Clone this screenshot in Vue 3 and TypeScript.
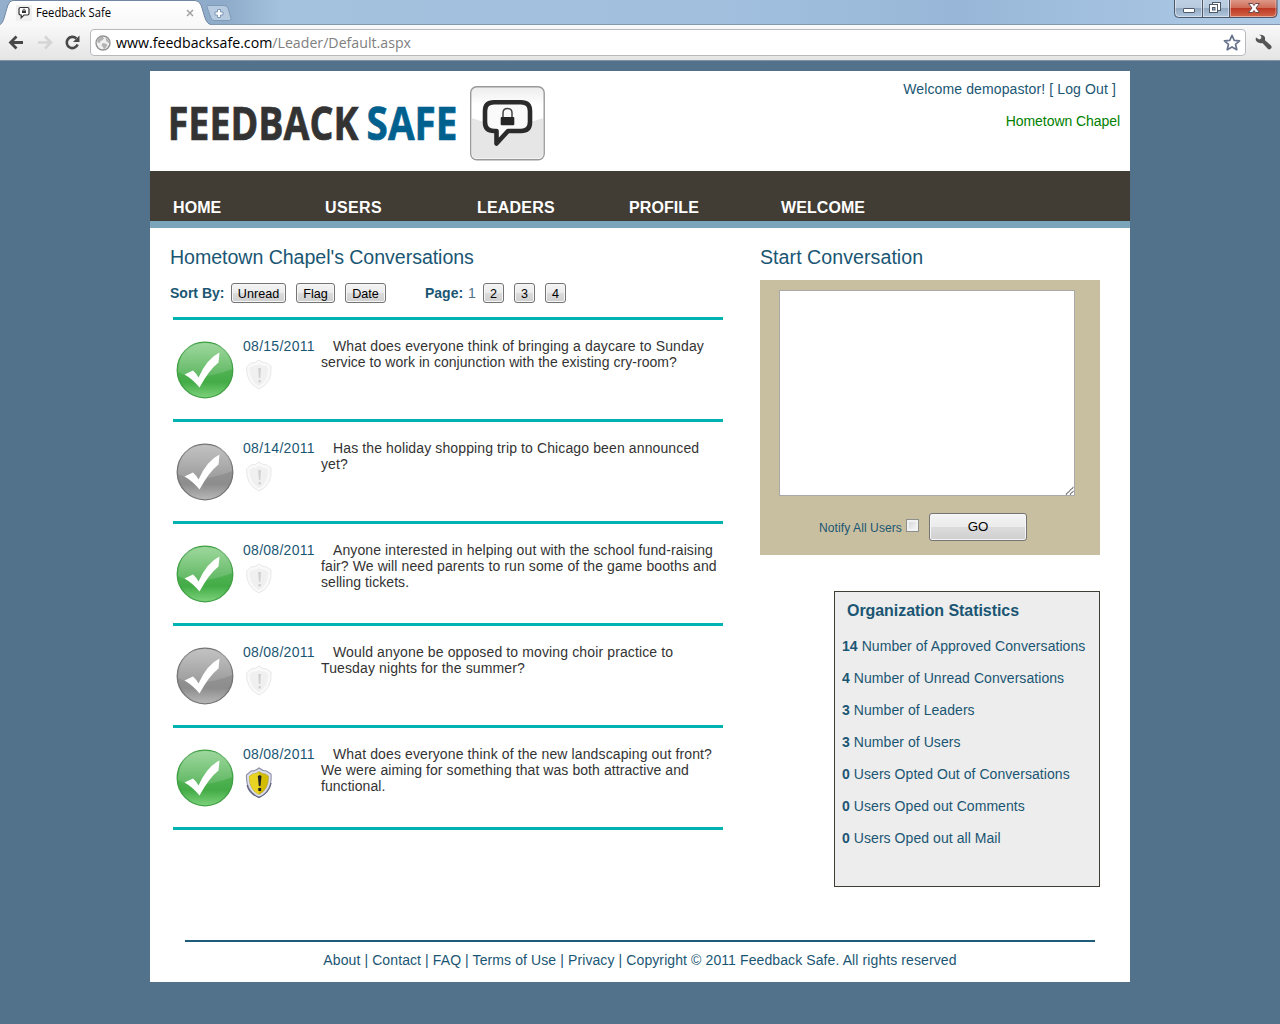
<script setup lang="ts">
interface Line {
  text: string
  tracking: number
}

interface Conversation {
  date: string
  read: boolean
  flagged: boolean
  lines: Line[]
}

interface Stat {
  count: number
  label: string
}

const navItems: string[] = ['HOME', 'USERS', 'LEADERS', 'PROFILE', 'WELCOME']
const sorts: string[] = ['Unread', 'Flag', 'Date']
const pages: number[] = [2, 3, 4]

const conversations: Conversation[] = [
  {
    date: '08/15/2011', read: false, flagged: false,
    lines: [
      { text: 'What does everyone think of bringing a daycare to Sunday', tracking: 0.135 },
      { text: 'service to work in conjunction with the existing cry-room?', tracking: 0.045 },
    ],
  },
  {
    date: '08/14/2011', read: true, flagged: false,
    lines: [
      { text: 'Has the holiday shopping trip to Chicago been announced', tracking: 0.12 },
      { text: 'yet?', tracking: 0.1 },
    ],
  },
  {
    date: '08/08/2011', read: false, flagged: false,
    lines: [
      { text: 'Anyone interested in helping out with the school fund-raising', tracking: 0.105 },
      { text: 'fair? We will need parents to run some of the game booths and', tracking: 0.1 },
      { text: 'selling tickets.', tracking: 0.06 },
    ],
  },
  {
    date: '08/08/2011', read: true, flagged: false,
    lines: [
      { text: 'Would anyone be opposed to moving choir practice to', tracking: 0.13 },
      { text: 'Tuesday nights for the summer?', tracking: 0.12 },
    ],
  },
  {
    date: '08/08/2011', read: false, flagged: true,
    lines: [
      { text: 'What does everyone think of the new landscaping out front?', tracking: 0.12 },
      { text: 'We were aiming for something that was both attractive and', tracking: 0.07 },
      { text: 'functional.', tracking: 0.05 },
    ],
  },
]

const stats: Stat[] = [
  { count: 14, label: 'Number of Approved Conversations' },
  { count: 4, label: 'Number of Unread Conversations' },
  { count: 3, label: 'Number of Leaders' },
  { count: 3, label: 'Number of Users' },
  { count: 0, label: 'Users Opted Out of Conversations' },
  { count: 0, label: 'Users Oped out Comments' },
  { count: 0, label: 'Users Oped out all Mail' },
]
</script>

<template>
  <div class="window">
    <div class="tabstrip">
      <svg class="tabs" width="240" height="25" viewBox="0 0 240 25">
        <defs>
          <linearGradient id="tabFill" x1="0" y1="0" x2="0" y2="1">
            <stop offset="0" stop-color="#ffffff" />
            <stop offset="1" stop-color="#f8f8f9" />
          </linearGradient>
        </defs>
        <path d="M0 24.5C4 23 5 13 8 5Q9.500 0.500 13 0.500H195Q199 0.500 201 5C204 13 205 24 211 24.500V25H0Z" fill="url(#tabFill)" />
        <path d="M0 24.500C4 23 5 13 8 5Q9.500 0.500 13 0.500H195Q199 0.500 201 5C204 13 205 24 211 24.500" fill="none" stroke="#6f87a2" />
        <path d="M207 7Q206 5.500 208 5.500H224Q227 5.500 228 8L231 18Q232 20.500 229 20.500H214Q212 20.500 211 18Z" fill="#b6cbe0" stroke="#7f9ab8" />
        <path d="M217.500 9.500h3v2.500h2.500v3h-2.500v2.500h-3v-2.500h-2.500v-3h2.500z" fill="#fff" stroke="#7590ad" stroke-width=".9" />
        <rect x="16" y="5" width="16" height="16" fill="#f0f0f0" />
        <path d="M20.500 7.500h7q1.500 0 1.500 1.500v4.500q0 1.500-1.500 1.500h-3.500l-2.800 2.800v-2.800q-2.200 0-2.200-1.500V9q0-1.500 1.500-1.500z" fill="#fff" stroke="#333" stroke-width="1.200" />
        <rect x="22" y="10.500" width="4" height="2.500" fill="#333" />
        <path d="M23 10.500V9.500q1-1.200 2 0v1" fill="none" stroke="#333" stroke-width=".7" />
        <text x="36" y="17" textLength="75" lengthAdjust="spacingAndGlyphs" font-family="'Open Sans','Noto Sans',sans-serif" font-size="12" fill="#000">Feedback Safe</text>
        <path d="M187 10l6 6M193 10l-6 6" stroke="#a3a3a3" stroke-width="1.500" />
      </svg>
      <svg class="controls" width="106" height="20" viewBox="0 0 106 20">
        <defs>
          <linearGradient id="ctl" x1="0" y1="0" x2="0" y2="1">
            <stop offset="0" stop-color="#bdd0e4" />
            <stop offset=".48" stop-color="#b6c9dd" />
            <stop offset=".5" stop-color="#94aac2" />
            <stop offset="1" stop-color="#b1c8df" />
          </linearGradient>
          <linearGradient id="closeFill" x1="0" y1="0" x2="0" y2="1">
            <stop offset="0" stop-color="#df9d8d" />
            <stop offset=".48" stop-color="#cf6b56" />
            <stop offset=".5" stop-color="#bd3822" />
            <stop offset="1" stop-color="#d2664a" />
          </linearGradient>
        </defs>
        <path d="M0.500-1V13.500Q0.500 17.500 4.500 17.500H99Q103 17.500 103 13.500V-1Z" fill="url(#ctl)" />
        <path d="M55.500-1V17.500H99Q103 17.500 103 13.500V-1Z" fill="url(#closeFill)" />
        <path d="M1.500 0V13Q1.500 16.500 5 16.500H98.500Q102 16.500 102 13V0M27.500 0V16M29.500 0V16M54.500 0V16M56.500 0V16" fill="none" stroke="#fff" stroke-opacity=".45" />
        <path d="M0.500-1V13.500Q0.500 17.500 4.500 17.500H99Q103 17.500 103 13.500V-1M28.500 0V17M55.500 0V17" fill="none" stroke="#4d5768" />
        <rect x="9.500" y="8.500" width="11" height="4" rx=".5" fill="#fff" stroke="#4d5a6c" />
        <rect x="38.500" y="2.500" width="8" height="8" fill="#fff" stroke="#4d5a6c" />
        <rect x="35.500" y="4.500" width="8" height="8" fill="#fff" stroke="#4d5a6c" />
        <rect x="38.500" y="7.500" width="2.500" height="2.500" fill="#9bb0c6" stroke="#4d5a6c" />
        <path d="M74.500 3.500h4l1.500 2 1.500-2h4l-3.500 4.500 3.500 4.500h-4l-1.500-2-1.500 2h-4l3.500-4.500z" fill="#fff" stroke="#6b4a4c" />
      </svg>
    </div>
    <div class="toolbar">
      <svg width="90" height="36" viewBox="0 25 90 36">
        <path d="M10 42.500H23M16.500 36.500L10.500 42.500L16.500 48.500" fill="none" stroke="#484848" stroke-width="2.800" />
        <path d="M38 42.500H50.500M45 36.500L51 42.500L45 48.500" fill="none" stroke="#d5d5d5" stroke-width="2.600" />
        <path d="M76.300 38.500A5.600 5.600 0 1 0 77.600 44.500" fill="none" stroke="#484848" stroke-width="2.600" />
        <path d="M79.500 35.500V42H73Z" fill="#484848" />
      </svg>
      <div class="omnibox">
        <svg class="globe" width="16" height="16" viewBox="0 0 16 16">
          <circle cx="8" cy="8" r="7" fill="#f0f0f0" stroke="#929292" stroke-width="1.400" />
          <path d="M2 4.500L5 1.800 8 2 9 3.500 7 5.500 5.500 6 5 8 2.500 7.500ZM7.500 8L10.500 8.500 12.500 10 11 12.500 9 14.500 8 12 6.500 10.500ZM10.500 2.500L13.500 5 14.500 8 12.500 7.500 11 5.500Z" fill="#b3b3b3" />
        </svg>
        <svg class="url" width="310" height="24" viewBox="0 0 310 24">
          <text x="1" y="17" textLength="295" lengthAdjust="spacingAndGlyphs" font-family="'Open Sans','Noto Sans',sans-serif" font-size="15" fill="#000">www.feedbacksafe.com<tspan fill="#808080">/Leader/Default.aspx</tspan></text>
        </svg>
        <svg class="star" width="18" height="18" viewBox="0 0 18 18">
          <path d="M9 1.300L11.200 6.300 16.600 6.800 12.500 10.300 13.800 15.700 9 12.900 4.200 15.700 5.500 10.300 1.400 6.800 6.800 6.300Z" fill="#fff" stroke="#68748d" stroke-width="1.700" stroke-linejoin="round" />
        </svg>
      </div>
      <svg class="wrench" width="18" height="18" viewBox="0 0 18 18">
        <path d="M1 3.500L4.200 5.600 6.300 4.500 6.200 2 4 0.800Q8.500 0 10 3.500L10 6.300 16 11.600Q17.200 13.200 16 14.600 14.600 16 13 14.900L7.400 9Q3 9.800 1 6.800 .4 5 1 3.500Z" fill="#555" />
      </svg>
    </div>
  </div>

  <div class="page">
    <header class="header">
      <svg class="logo" width="400" height="90" viewBox="0 0 400 90">
        <defs>
          <linearGradient id="badge" x1="0" y1="0" x2="0" y2="1">
            <stop offset="0" stop-color="#ececec" />
            <stop offset=".25" stop-color="#ffffff" />
          </linearGradient>
        </defs>
        <g font-family="'Open Sans','Noto Sans',sans-serif" font-weight="700" font-size="47" stroke-width=".7">
          <text transform="translate(17.700 69.300) scale(.8 1)" fill="#333" stroke="#333">FEEDBACK</text>
          <text transform="translate(216.600 69.300) scale(.822 1)" fill="#00618f" stroke="#00618f">SAFE</text>
        </g>
        <rect x="320.700" y="15.700" width="73.500" height="73" rx="6" fill="url(#badge)" stroke="#999" stroke-width="1.400" />
        <path d="M322 47Q357 61 393 47V82Q393 87.500 387 87.500H328Q322 87.500 322 82Z" fill="#e6e6e6" />
        <path d="M344 31.300H371Q380 31.300 380 40V51Q380 60 371 60H358L346.500 72.500V60H344Q335 60 335 51V40Q335 31.300 344 31.300Z" fill="#fafafa" stroke="#2b2b2b" stroke-width="4.600" stroke-linejoin="round" />
        <path d="M353 47V42Q353 37.500 357.500 37.500T362 42V47" fill="none" stroke="#444" stroke-width="1.500" />
        <rect x="350.700" y="46" width="13.600" height="8.300" rx="1" fill="#262626" />
      </svg>
      <div class="account">
        <div class="welcome">Welcome demopastor! [ <a>Log Out</a> ]</div>
        <div class="org">Hometown Chapel</div>
      </div>
    </header>

    <nav class="nav">
      <a v-for="item in navItems" :key="item">{{ item }}</a>
    </nav>

    <main class="main">
      <section class="feed">
        <h2 class="feed-title">Hometown Chapel's Conversations</h2>
        <div class="filters">
          <b class="sort-label">Sort By:</b>
          <button v-for="sort in sorts" :key="sort" class="btn" :class="sort.toLowerCase()">{{ sort }}</button>
          <b class="page-label">Page:</b>
          <span class="current">1</span>
          <button v-for="number in pages" :key="number" class="btn num">{{ number }}</button>
        </div>
        <div class="list">
          <article v-for="(item, index) in conversations" :key="index" class="row">
            <svg class="status" width="58" height="58" viewBox="0 0 58 58">
              <defs>
                <linearGradient :id="`ball${index}`" x1="0" y1="0" x2="0" y2="1">
                  <stop offset="0" :stop-color="item.read ? '#a8a8a8' : '#74c673'" />
                  <stop offset=".5" :stop-color="item.read ? '#939393' : '#50b253'" />
                  <stop offset=".72" :stop-color="item.read ? '#8d8d8d' : '#43ac46'" />
                  <stop offset="1" :stop-color="item.read ? '#b8b8b8' : '#7dd27c'" />
                </linearGradient>
                <linearGradient :id="`shine${index}`" x1="0" y1="0" x2="0" y2="1">
                  <stop offset="0" stop-color="#fff" stop-opacity=".3" />
                  <stop offset="1" stop-color="#fff" stop-opacity=".12" />
                </linearGradient>
              </defs>
              <circle cx="29" cy="29" r="27.800" :fill="`url(#ball${index})`" :stroke="item.read ? '#757575' : '#3f9f43'" stroke-width="1.300" />
              <path d="M2 31Q15 38 31 35T56 28Q55 2 29 2T2 31Z" :fill="`url(#shine${index})`" />
              <path d="M8.500 33.500L17 29.500Q20 32 22.500 36.500Q31 17.500 43.500 11.500L42.500 21.500Q33 29 23.500 46.500Q16.500 38 8.500 33.500Z" fill="#fff" />
            </svg>
            <div class="meta">
              <span class="date">{{ item.date }}</span>
              <svg class="shield" width="28" height="32" viewBox="0 0 28 32">
                <template v-if="item.flagged">
                  <path d="M14 1Q17.500 4 21.500 4L26 7Q27.500 24 14 30.500Q.5 24 1.500 8L6 4Q11 4 14 1Z" fill="#dcdeea" stroke="#8d8fa6" stroke-width="1.100" />
                  <path d="M2 18Q4 26.500 14 30.500Q24 26.500 26.200 16" fill="none" stroke="#5d607b" stroke-width="1.100" />
                  <path d="M14 4.500Q17.500 7 20.500 7L23.500 9Q24 22.500 14 27.500Q4 22.500 4.300 9.500L7.500 7Q11.500 7 14 4.500Z" fill="#d3bd04" stroke="#a79a45" stroke-width=".6" />
                  <path d="M14 5Q11.500 7 7.500 7L4.500 9.500Q4 22 14 27.500Z" fill="#e9d323" />
                  <path d="M12.800 9Q14.500 7.500 16.500 9L15.500 19H13.800ZM13.300 21h2.800v3h-2.800z" fill="#222" />
                </template>
                <template v-else>
                  <path d="M14 1Q17.500 4 21.500 4L26 7Q27.500 24 14 30Q1 24 1.500 8L6 4Q11 4 14 1Z" fill="#f9f9f9" stroke="#e8e8e8" />
                  <path d="M14 5Q17.500 7 20.500 7L23 9Q23.500 22 14 27Q4.500 22 4.500 9L7.500 7Q11.500 7 14 5Z" fill="#f0f0f0" />
                  <path d="M13.200 9h2.800L15.300 19h-1.400zM13.500 21h2.300v2.500h-2.300z" fill="#d0d0d0" />
                </template>
              </svg>
            </div>
            <p class="message">
              <span v-for="line in item.lines" :key="line.text" :style="{ letterSpacing: `${line.tracking}px` }">{{ line.text }}</span>
            </p>
          </article>
        </div>
      </section>

      <aside class="side">
        <h2 class="start-title">Start Conversation</h2>
        <div class="compose">
          <div class="textarea">
            <svg width="9" height="9" viewBox="0 0 9 9"><path d="M1 8.500L8.500 1M5 8.500L8.500 5" stroke="#555" stroke-width="1.100" stroke-dasharray="1.600 .4" /></svg>
          </div>
          <div class="submit">
            <span>Notify All Users</span>
            <i class="checkbox"></i>
            <button class="btn go">GO</button>
          </div>
        </div>
        <div class="stats">
          <h3>Organization Statistics</h3>
          <p v-for="stat in stats" :key="stat.label"><b>{{ stat.count }}</b> {{ stat.label }}</p>
        </div>
      </aside>
    </main>

    <footer class="footer">About | Contact | FAQ | Terms of Use | Privacy | Copyright © 2011 Feedback Safe. All rights reserved</footer>
  </div>
</template>

<style>
html,
body {
  margin: 0;
  background: #52728b;
}
body {
  height: 1024px;
  overflow: hidden;
}
</style>

<style scoped>
* {
  box-sizing: border-box;
}
.window {
  height: 61px;
  border-bottom: 1px solid #8393a3;
}
.tabstrip {
  height: 25px;
  display: flex;
  justify-content: space-between;
  background: linear-gradient(90deg, #94afcc 0, #8eabc9 225px, #a4c1de 280px, #a2c0de 700px, #98b7d8 960px, #a7c4e2 1180px, #adc9e5 100%);
  box-shadow: inset 0 -1px #8398b0;
}
.tabs,
.controls,
.toolbar svg {
  display: block;
  flex: none;
}
.toolbar {
  height: 35px;
  display: flex;
  background: linear-gradient(#f9f9f9, #e4e4e5);
}
.omnibox {
  width: 1156px;
  height: 27px;
  margin-top: 4px;
  border: 1px solid #b7b9bc;
  border-radius: 4px;
  background: #fff;
  display: flex;
  align-items: center;
}
.globe {
  margin-left: 4px;
}
.url {
  margin-left: 4px;
}
.star {
  margin-left: auto;
  margin-right: 4px;
}
.wrench {
  margin: 9px 0 0 9px;
}
.page {
  width: 980px;
  height: 911px;
  margin: 10px auto 0;
  background: #fff;
  color: #1a5673;
  font: 14px/16px 'Liberation Sans', Arial, sans-serif;
}
.header {
  height: 100px;
  display: flex;
  justify-content: space-between;
}
.account {
  padding: 10px 10px 0 0;
  text-align: right;
}
.welcome {
  padding-right: 4px;
  letter-spacing: 0.12px;
}
.org {
  margin-top: 16px;
  color: #008000;
  letter-spacing: -0.06px;
}
.nav {
  height: 57px;
  display: flex;
  padding: 27px 0 0 23px;
  border-bottom: 7px solid #7aa5ba;
  background: #413c34;
  color: #fff;
  font-size: 16px;
  font-weight: 700;
  line-height: 19px;
  letter-spacing: 0.08px;
}
.nav a {
  width: 152px;
}
.nav a:nth-child(2) {
  letter-spacing: 0.4px;
}
.nav a:nth-child(3) {
  letter-spacing: 0.2px;
}
.main {
  height: 712px;
  display: flex;
}
h2 {
  margin: 0;
  font-size: 19.6px;
  font-weight: 400;
  line-height: 24px;
}
.feed-title {
  letter-spacing: -0.05px;
}
.start-title {
  letter-spacing: 0.05px;
}
.feed {
  width: 610px;
  padding: 17px 0 0 20px;
}
.filters {
  height: 20px;
  margin-top: 14px;
  display: flex;
  align-items: center;
}
.sort-label {
  width: 61px;
}
.btn {
  height: 20px;
  margin: 0 10px 0 0;
  padding: 1px 0 0;
  border: 1px solid #747474;
  border-radius: 3px;
  background: linear-gradient(#f4f4f4 0, #ebebeb 49%, #dcdcdc 50%, #cfcfcf 100%);
  box-shadow: inset 0 0 0 1px #f6f6f6;
  color: #000;
  text-align: center;
  font: 12.6px/16px 'Liberation Sans', Arial, sans-serif;
}
.unread {
  width: 55px;
}
.flag {
  width: 39px;
}
.date.btn {
  width: 41px;
}
.page-label {
  margin-left: 29px;
  width: 43px;
}
.current {
  width: 15px;
  color: #4d7287;
}
.num {
  width: 21px;
}
.list {
  width: 550px;
  margin: 14px 0 0 3px;
  border-top: 3px solid #00b2b1;
}
.row {
  height: 102px;
  display: flex;
  border-bottom: 3px solid #00b2b1;
}
.status {
  margin: 21px 0 0 3px;
  flex: none;
}
.meta {
  width: 78px;
  flex: none;
  padding: 18px 0 0 9px;
  display: flex;
  flex-direction: column;
  letter-spacing: 0.28px;
}
.shield {
  margin: 5px 0 0 2px;
}
.message {
  margin: 18px 0 0 9px;
  color: #333;
}
.message span {
  display: block;
  white-space: nowrap;
}
.message span:first-child {
  padding-left: 12px;
}
.side {
  width: 340px;
  padding-top: 17px;
  display: flex;
  flex-direction: column;
}
.compose {
  height: 275px;
  margin-top: 11px;
  padding: 10px 19px;
  background: #c8bea0;
}
.textarea {
  width: 296px;
  height: 206px;
  border: 1px solid #a9a9a9;
  background: #fff;
  display: flex;
  align-items: flex-end;
  justify-content: flex-end;
}
.submit {
  display: flex;
  align-items: center;
  height: 28px;
  margin: 17px 0 0 40px;
  font-size: 12px;
}
.submit span {
  width: 83px;
  padding-top: 1px;
  letter-spacing: 0.1px;
  white-space: nowrap;
}
.checkbox {
  width: 13px;
  height: 13px;
  margin: -4px 10px 0 4px;
  border: 1px solid #8e8f8f;
  background: linear-gradient(135deg, #cfd3d8, #fafafa);
  box-shadow: inset 0 0 0 2px #f2f2f2;
}
.go {
  width: 98px;
  height: 28px;
  margin: 0;
  padding: 0;
  font-size: 13.3px;
}
.stats {
  width: 266px;
  height: 296px;
  margin-top: 36px;
  align-self: flex-end;
  padding: 9px 7px;
  border: 1px solid #403d33;
  background: #ededed;
}
.stats h3 {
  margin: 0 0 17px 5px;
  font-size: 16px;
  line-height: 20px;
  letter-spacing: -0.06px;
}
.stats p {
  margin: 0 0 16px;
  white-space: nowrap;
  letter-spacing: 0.06px;
}
.footer {
  margin: 0 35px;
  padding-top: 10px;
  border-top: 2px solid #1d5b78;
  text-align: center;
  letter-spacing: 0.1px;
}
</style>
